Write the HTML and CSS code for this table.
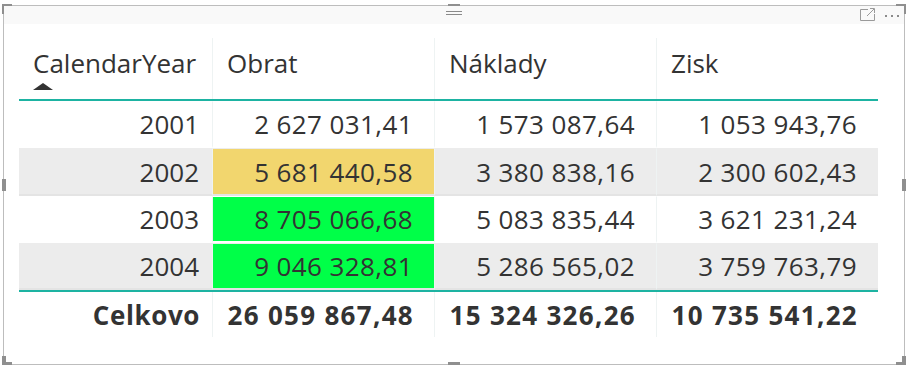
FILE: index.html
```html
<!DOCTYPE html>
<html lang="sk">
<head>
<meta charset="utf-8">
<title>Tabuľka</title>
<link rel="stylesheet" href="styles.css">
</head>
<body>
<div class="frame">
  <span class="handle h-tl"></span>
  <span class="handle h-tm"></span>
  <span class="handle h-tr"></span>
  <span class="handle h-ml"></span>
  <span class="handle h-mr"></span>
  <span class="handle h-bl"></span>
  <span class="handle h-bm"></span>
  <span class="handle h-br"></span>
  <div class="topbar">
    <span class="grip"><i></i><i></i></span>
    <div class="tools">
      <svg class="focus" width="15" height="13" viewBox="0 0 15 13" fill="none" stroke="#9a9a9a" stroke-width="1">
        <path d="M8 1.5 H0.5 V12.5 H14.5 V6"/>
        <path d="M7 8 L14 1"/>
        <path d="M10 0.5 H14.5 V5"/>
      </svg>
      <span class="dots"><i></i><i></i><i></i></span>
    </div>
  </div>
  <div class="table">
    <div class="row head">
      <div class="cell first"><span class="label">CalendarYear</span><span class="sort"></span></div>
      <div class="cell"><span class="label">Obrat</span></div>
      <div class="cell"><span class="label">Náklady</span></div>
      <div class="cell"><span class="label">Zisk</span></div>
    </div>
    <div class="row data r1">
      <div class="cell first">2001</div>
      <div class="cell num">2 627 031,41</div>
      <div class="cell num">1 573 087,64</div>
      <div class="cell num">1 053 943,76</div>
    </div>
    <div class="row data alt r2">
      <div class="cell first">2002</div>
      <div class="cell num yellow">5 681 440,58</div>
      <div class="cell num">3 380 838,16</div>
      <div class="cell num">2 300 602,43</div>
    </div>
    <div class="row data r3">
      <div class="cell first">2003</div>
      <div class="cell num green">8 705 066,68</div>
      <div class="cell num">5 083 835,44</div>
      <div class="cell num">3 621 231,24</div>
    </div>
    <div class="row data alt r4">
      <div class="cell first">2004</div>
      <div class="cell num green">9 046 328,81</div>
      <div class="cell num">5 286 565,02</div>
      <div class="cell num">3 759 763,79</div>
    </div>
    <div class="row total">
      <div class="cell first">Celkovo</div>
      <div class="cell num">26 059 867,48</div>
      <div class="cell num">15 324 326,26</div>
      <div class="cell num">10 735 541,22</div>
    </div>
  </div>
</div>
</body>
</html>
```

FILE: styles.css
```css
html, body {
  margin: 0;
  padding: 0;
  background: #ffffff;
}

body {
  font-family: "Open Sans", "Noto Sans", sans-serif;
  color: #333333;
}

.frame {
  position: relative;
  box-sizing: border-box;
  width: 902px;
  height: 360px;
  margin: 5px 0 0 3px;
  border: 1px solid #bdbdbd;
  background: #ffffff;
}

.handle {
  position: absolute;
  background: #8f8f8f;
}
.h-tl { left: -2px; top: -2px; width: 10px; height: 4px; }
.h-tl::after { content: ""; position: absolute; left: 0; top: 4px; width: 4px; height: 6px; background: #8f8f8f; }
.h-tr { right: -2px; top: -2px; width: 10px; height: 4px; }
.h-tr::after { content: ""; position: absolute; right: 0; top: 4px; width: 4px; height: 6px; background: #8f8f8f; }
.h-bl { left: -2px; bottom: -2px; width: 10px; height: 4px; }
.h-bl::after { content: ""; position: absolute; left: 0; bottom: 4px; width: 4px; height: 6px; background: #8f8f8f; }
.h-br { right: -2px; bottom: -2px; width: 10px; height: 4px; }
.h-br::after { content: ""; position: absolute; right: 0; bottom: 4px; width: 4px; height: 6px; background: #8f8f8f; }
.h-tm { left: 444px; top: -2px; width: 12px; height: 4px; }
.h-bm { left: 444px; bottom: -2px; width: 12px; height: 4px; }
.h-ml { left: -2px; top: 173px; width: 4px; height: 12px; }
.h-mr { right: -2px; top: 173px; width: 4px; height: 12px; }

.topbar {
  position: relative;
  height: 18px;
  background: #f9f9f9;
}

.grip {
  position: absolute;
  left: 442px;
  top: 5px;
  display: flex;
  flex-direction: column;
  gap: 2px;
}
.grip i {
  display: block;
  width: 16px;
  height: 1px;
  background: #8a8a8a;
}

.tools {
  position: absolute;
  right: 5px;
  top: 2px;
  display: flex;
  align-items: center;
  gap: 10px;
}
.focus { display: block; }
.dots {
  display: flex;
  gap: 4px;
  padding-top: 2px;
}
.dots i {
  display: block;
  width: 2px;
  height: 2px;
  background: #8a8a8a;
}

.table {
  margin: 14px 0 0 15px;
  width: 859px;
}

.row {
  display: grid;
  grid-template-columns: 193px 222px 222px 222px;
  font-size: 26px;
}

.cell {
  box-sizing: border-box;
  border-left: 1px solid #eef3f3;
  display: flex;
  align-items: center;
  justify-content: flex-end;
  padding-right: 21px;
  white-space: nowrap;
}
.cell.first {
  border-left: none;
  padding-right: 13px;
}
.data .num {
  letter-spacing: 0.4px;
  padding-right: 21px;
}

.head {
  height: 61px;
  border-bottom: 2px solid #1db3a2;
}
.head .cell {
  flex-direction: column;
  align-items: flex-start;
  justify-content: flex-start;
  padding: 9px 0 0 14px;
}
.head .label {
  display: block;
  line-height: 32px;
}
.sort {
  display: block;
  margin-top: 4px;
  width: 0;
  height: 0;
  border-left: 10px solid transparent;
  border-right: 10px solid transparent;
  border-bottom: 7px solid #333333;
}

.data { height: 47px; }
.data.r2 { height: 48px; }
.data .cell {
  border-top: 1px solid transparent;
  border-bottom: 2px solid transparent;
  background-clip: padding-box;
}
.alt {
  background: #ececec;
  box-shadow: inset 0 -2px 0 #e4e4e4;
}
.yellow { background-color: #f2d66e; }
.green { background-color: #00ff48; }

.total {
  height: 45px;
  border-top: 2px solid #1db3a2;
  font-weight: 700;
}
.total .first {
  letter-spacing: 0.6px;
  padding-right: 12px;
}
.total .num {
  letter-spacing: 1.3px;
  padding-right: 20px;
}
```
